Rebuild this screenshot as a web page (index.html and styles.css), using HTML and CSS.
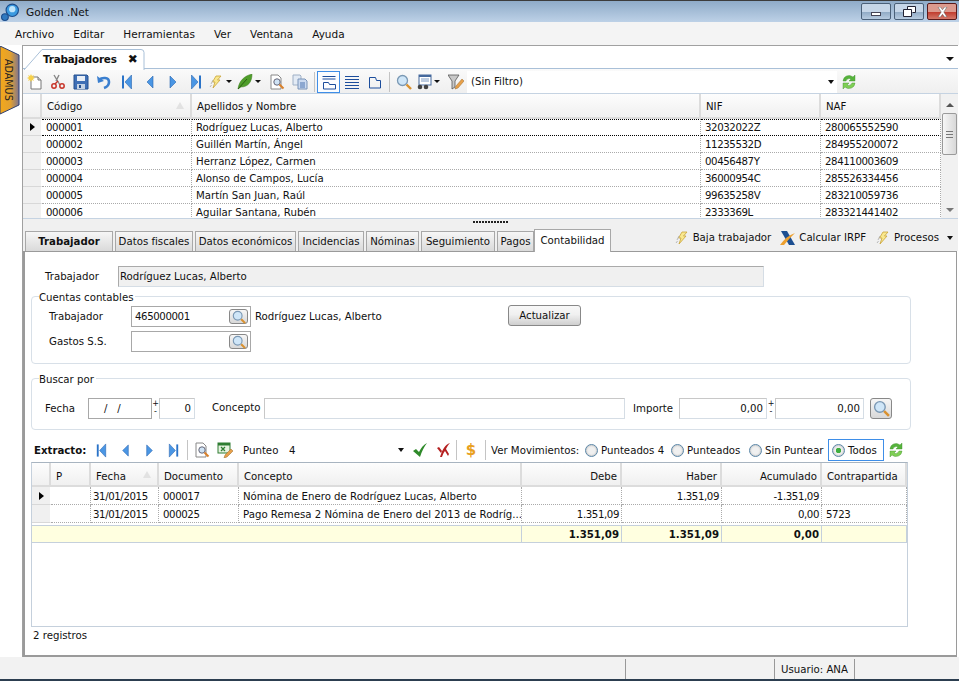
FILE: index.html
```html
<!DOCTYPE html>
<html lang="es">
<head>
    <meta charset="UTF-8">
    <title>Golden .Net</title>
    <link rel="stylesheet" href="styles.css">
</head>
<body>
<svg class="defs" width="0" height="0">
    <defs>
        <symbol id="i-new" viewBox="0 0 16 16"><path d="M4 3h7l3 3v9H4z" fill="#fff" stroke="#777"/><path d="M11 3v3h3" fill="#ddd" stroke="#777"/><path d="M4 0l1 2 2-1-1 2 2 1-2 1 1 2-2-1-1 2-1-2-2 1 1-2-2-1 2-1-1-2 2 1z" fill="#f6d04a"/></symbol>
        <symbol id="i-cut" viewBox="0 0 16 16"><path d="M4 1l6 10M9 1L6 7" stroke="#888" stroke-width="1.4" fill="none"/><circle cx="4" cy="12" r="2.2" fill="none" stroke="#c8352a" stroke-width="1.5"/><circle cx="12" cy="12" r="2.2" fill="none" stroke="#c8352a" stroke-width="1.5"/><path d="M5 10l3-3" stroke="#c8352a" stroke-width="1.4"/></symbol>
        <symbol id="i-save" viewBox="0 0 16 16"><path d="M1 1h13l1 1v13H1z" fill="#3f6fb5" stroke="#25508f"/><rect x="4" y="2" width="8" height="5" fill="#e8eef6"/><rect x="4" y="10" width="8" height="5" fill="#c4d2e4"/><rect x="6" y="11" width="2" height="3" fill="#25508f"/></symbol>
        <symbol id="i-undo" viewBox="0 0 16 16"><path d="M3 6c3-3 10-3 10 2 0 3-2 5-5 6" fill="none" stroke="#3b7fcf" stroke-width="2.6"/><path d="M1 2l1 7 6-2z" fill="#3b7fcf"/></symbol>
        <symbol id="i-first" viewBox="0 0 16 16"><rect x="3" y="1.500" width="2" height="13" fill="#2a73c8"/><path d="M12.500 1v14L6 8z" fill="#4a96e4" stroke="#2a66b0" stroke-width=".6"/></symbol>
        <symbol id="i-prev" viewBox="0 0 16 16"><path d="M11 2v12L5 8z" fill="#4a96e4" stroke="#2a66b0" stroke-width=".6"/></symbol>
        <symbol id="i-next" viewBox="0 0 16 16"><path d="M5 2v12l6-6z" fill="#4a96e4" stroke="#2a66b0" stroke-width=".6"/></symbol>
        <symbol id="i-last" viewBox="0 0 16 16"><rect x="11" y="1.500" width="2" height="13" fill="#2a73c8"/><path d="M3.500 1v14l6.500-7z" fill="#4a96e4" stroke="#2a66b0" stroke-width=".6"/></symbol>
        <symbol id="i-bolt" viewBox="0 0 16 16"><path d="M8 2h5L9.500 6H12l-7 8 2-6H4.500z" fill="#f9e88e" stroke="#c9a338" stroke-width=".8"/><path d="M3 10l2-4M2 13l1.500-2" stroke="#aaa" stroke-width=".8"/></symbol>
        <symbol id="i-leaf" viewBox="0 0 16 16"><path d="M1 15C2 7 7 2 15 0c0 8-4 13-11 13z" fill="#4f9e2a" stroke="#38761c" stroke-width=".5"/><path d="M1 15L10 5" stroke="#2c5f14"/></symbol>
        <symbol id="i-preview" viewBox="0 0 16 16"><path d="M2 1h7l3 3v11H2z" fill="#fff" stroke="#888"/><circle cx="8" cy="8" r="3.2" fill="#cfe3f5" stroke="#667"/><path d="M10.500 10.500l4 4" stroke="#d9802a" stroke-width="2"/></symbol>
        <symbol id="i-copy" viewBox="0 0 16 16"><path d="M1 1h7l1 1v9H1z" fill="#e3ebf5" stroke="#9fb0c6"/><path d="M6 5h7l2 2v8H6z" fill="#cbdaf0" stroke="#7a94b8"/><path d="M8 9h5M8 11h5M8 13h5" stroke="#4d75b0"/></symbol>
        <symbol id="i-form" viewBox="0 0 16 16"><path d="M1.500 2.500h13M1.500 5h13" stroke="#1c4d9c" fill="none"/><path d="M2.500 15V8.500h5l1 2h6V15z" fill="none" stroke="#1c4d9c"/></symbol>
        <symbol id="i-lines" viewBox="0 0 16 16"><path d="M1 2.500h14M1 5.500h14M1 8.500h14M1 11.500h14M1 14.500h14" stroke="#1c4d9c"/></symbol>
        <symbol id="i-folder" viewBox="0 0 16 16"><path d="M2.500 14V3.500h6l1 3h4V14z" fill="none" stroke="#1c4d9c"/></symbol>
        <symbol id="i-search" viewBox="0 0 16 16"><circle cx="6.500" cy="6.500" r="5" fill="#cfe6f8" stroke="#7a98b4" stroke-width="1.300"/><path d="M10.500 10.500l4.500 4.500" stroke="#d9912f" stroke-width="2.400"/></symbol>
        <symbol id="i-report" viewBox="0 0 16 16"><rect x="3" y="1" width="12" height="10" fill="#fff" stroke="#44689c"/><rect x="3" y="1" width="12" height="2" fill="#44689c"/><path d="M5 5h8M5 7h8" stroke="#7f9cc4"/><circle cx="4" cy="13" r="2.300" fill="#444"/><circle cx="10" cy="13" r="2.300" fill="#444"/></symbol>
        <symbol id="i-filter" viewBox="0 0 16 16"><path d="M0 1h11L7 7v6L4 15V7z" fill="#c8c8c8" stroke="#555" stroke-width=".8"/><path d="M14 5l2 2-6 7-3 1 1-3z" fill="#e8a04a" stroke="#9a6a2a" stroke-width=".5"/></symbol>
        <symbol id="i-refresh" viewBox="0 0 16 16"><path d="M2 7a6 6 0 0 1 10-4l2-2v6H8l2-2a3.500 3.500 0 0 0-5 2z" fill="#56b33c" stroke="#3f8f2c" stroke-width=".4"/><path d="M14 9a6 6 0 0 1-10 4l-2 2V9h6l-2 2a3.500 3.500 0 0 0 5-2z" fill="#7fcf55" stroke="#3f8f2c" stroke-width=".4"/></symbol>
        <symbol id="i-check" viewBox="0 0 16 16"><path d="M1 9l3-2 3 3c2-4 4-7 8-9-3 4-5 8-7 14z" fill="#2f8a2a"/></symbol>
        <symbol id="i-cross" viewBox="0 0 16 16"><path d="M15 1C10 3 8 6 5 15l2 0c1-3 2-5 3-6l3 5 1-2-3-5c1-2 2-4 4-6z" fill="#b52020"/><path d="M2 6l2-1 3 4-1 2z" fill="#b52020"/></symbol>
        <symbol id="i-excel" viewBox="0 0 16 16"><rect x="1" y="1" width="12" height="10" fill="#e6f2e0" stroke="#2f7d32"/><rect x="1" y="1" width="12" height="2.500" fill="#2f7d32"/><path d="M4 5l4 4M8 5L4 9" stroke="#2f7d32" stroke-width="1.300"/><path d="M14 7l2 2-6 6-3 1 1-3z" fill="#e8a04a" stroke="#9a6a2a" stroke-width=".5"/></symbol>
        <symbol id="i-irpf" viewBox="0 0 16 16"><path d="M1 1h6l8 14H9z" fill="#1d4f91"/><path d="M0 15C4 9 9 5 15 3l-5 5-6 7z" fill="#eda02f"/></symbol>
    </defs>
</svg>

<div class="window">
    <div class="titlebar">
        <svg class="app-logo" viewBox="0 0 16 16"><circle cx="10" cy="6.500" r="5.500" fill="#3a9ae0" stroke="#1c4d8c"/><circle cx="10" cy="5.500" r="2.800" fill="#bfe4fa"/><circle cx="3.500" cy="12.500" r="3" fill="#2f79c0" stroke="#1c4d8c"/></svg>
        <span class="app-title">Golden .Net</span>
        <div class="win-btns">
            <div class="win-btn"><span class="min-mark"></span></div>
            <div class="win-btn"><svg width="13" height="11" viewBox="0 0 13 11"><path d="M4.500 3V.500h8v6H9.500M.500 3.500h8v7h-8z" fill="#fff" stroke="#223"/></svg></div>
            <div class="win-btn close"><svg width="13" height="10" viewBox="0 0 13 10"><path d="M2 0h2.500l2 2.700L8.500 0H11L7.800 5 11 10H8.500l-2-2.700L4.500 10H2l3.200-5z" fill="#fff" stroke="#555" stroke-width=".5"/></svg></div>
        </div>
    </div>

    <div class="menubar">
        <span>Archivo</span><span>Editar</span><span>Herramientas</span><span>Ver</span><span>Ventana</span><span>Ayuda</span>
    </div>

    <div class="workspace">
        <div class="side">
            <svg class="side-tab" width="20" height="69" viewBox="0 0 20 69">
                <defs><linearGradient id="sideg"><stop offset="0" stop-color="#f4a81a"/><stop offset=".55" stop-color="#e2a030"/><stop offset="1" stop-color="#7d7590"/></linearGradient></defs>
                <path d="M0 0l19 9v50L0 68z" fill="url(#sideg)" stroke="#2e3f70"/>
                <text transform="translate(5 13) rotate(90)" class="side-text">ADAMUS</text>
            </svg>
        </div>

        <div class="doc">
            <div class="doc-tabs">
                <div class="doc-tab">
                    <svg class="doc-tab-edge" width="121" height="21" viewBox="0 0 121 21"><path d="M0 21L18 .500h99q3 0 3 3V21" fill="#fff" stroke="#a9c0d8"/></svg>
                    <b>Trabajadores</b><span class="doc-x">✖</span>
                </div>
                <span class="caret doc-caret"></span>
            </div>

            <div class="toolbar main-tools">
                <span class="tool"><svg><use href="#i-new"/></svg></span>
                <span class="tool"><svg><use href="#i-cut"/></svg></span>
                <span class="tool"><svg><use href="#i-save"/></svg></span>
                <span class="tool"><svg><use href="#i-undo"/></svg></span>
                <span class="tool"><svg><use href="#i-first"/></svg></span>
                <span class="tool"><svg><use href="#i-prev"/></svg></span>
                <span class="tool"><svg><use href="#i-next"/></svg></span>
                <span class="tool"><svg><use href="#i-last"/></svg></span>
                <span class="tool with-caret"><svg><use href="#i-bolt"/></svg><i class="caret"></i></span>
                <span class="tool with-caret"><svg><use href="#i-leaf"/></svg><i class="caret"></i></span>
                <span class="tool"><svg><use href="#i-preview"/></svg></span>
                <span class="tool"><svg><use href="#i-copy"/></svg></span>
                <span class="sep"></span>
                <span class="tool on"><svg><use href="#i-form"/></svg></span>
                <span class="tool"><svg><use href="#i-lines"/></svg></span>
                <span class="tool"><svg><use href="#i-folder"/></svg></span>
                <span class="sep"></span>
                <span class="tool"><svg><use href="#i-search"/></svg></span>
                <span class="tool with-caret"><svg><use href="#i-report"/></svg><i class="caret"></i></span>
                <span class="tool"><svg><use href="#i-filter"/></svg></span>
                <div class="filter-combo"><span>(Sin Filtro)</span><i class="caret"></i></div>
                <span class="tool"><svg><use href="#i-refresh"/></svg></span>
            </div>

            <div class="workers">
                <div class="workers-grid">
                    <div class="row head">
                        <div class="sel"></div>
                        <div class="cell sorted">Código<i class="sort-mark"></i></div>
                        <div class="cell">Apellidos y Nombre</div>
                        <div class="cell">NIF</div>
                        <div class="cell">NAF</div>
                    </div>
                    <div class="row current">
                        <div class="sel"><i class="row-arrow"></i></div>
                        <div class="cell d">000001</div><div class="cell">Rodríguez Lucas, Alberto</div><div class="cell d">32032022Z</div><div class="cell d">280065552590</div>
                    </div>
                    <div class="row">
                        <div class="sel"></div>
                        <div class="cell d">000002</div><div class="cell">Guillén Martín, Ángel</div><div class="cell d">11235532D</div><div class="cell d">284955200072</div>
                    </div>
                    <div class="row">
                        <div class="sel"></div>
                        <div class="cell d">000003</div><div class="cell">Herranz López, Carmen</div><div class="cell d">00456487Y</div><div class="cell d">284110003609</div>
                    </div>
                    <div class="row">
                        <div class="sel"></div>
                        <div class="cell d">000004</div><div class="cell">Alonso de Campos, Lucía</div><div class="cell d">36000954C</div><div class="cell d">285526334456</div>
                    </div>
                    <div class="row">
                        <div class="sel"></div>
                        <div class="cell d">000005</div><div class="cell">Martín San Juan, Raúl</div><div class="cell d">99635258V</div><div class="cell d">283210059736</div>
                    </div>
                    <div class="row">
                        <div class="sel"></div>
                        <div class="cell d">000006</div><div class="cell">Aguilar Santana, Rubén</div><div class="cell d">2333369L</div><div class="cell d">283321441402</div>
                    </div>
                </div>
                <div class="scrollbar">
                    <i class="scroll-up"></i>
                    <div class="scroll-thumb"><span class="grip"></span></div>
                    <i class="scroll-down"></i>
                </div>
            </div>

            <div class="splitter"><span></span></div>

            <div class="tabs-bar">
                <div class="tabs">
                    <div class="tab t-main">Trabajador</div>
                    <div class="tab t-fiscal">Datos fiscales</div>
                    <div class="tab t-eco">Datos económicos</div>
                    <div class="tab t-inc">Incidencias</div>
                    <div class="tab t-nom">Nóminas</div>
                    <div class="tab t-seg">Seguimiento</div>
                    <div class="tab t-pag">Pagos</div>
                    <div class="tab active">Contabilidad</div>
                </div>
                <div class="tab-actions">
                    <span class="action"><svg><use href="#i-bolt"/></svg>Baja trabajador</span>
                    <span class="action"><svg><use href="#i-irpf"/></svg>Calcular IRPF</span>
                    <span class="action"><svg><use href="#i-bolt"/></svg>Procesos<i class="caret"></i></span>
                </div>
            </div>

            <div class="panel">
                <div class="worker-row">
                    <label>Trabajador</label>
                    <div class="readonly">Rodríguez Lucas, Alberto</div>
                </div>

                <fieldset class="group accounts">
                    <legend>Cuentas contables</legend>
                    <div class="account-row">
                        <label>Trabajador</label>
                        <div class="lookup"><span class="d">465000001</span><button class="lens"><svg><use href="#i-search"/></svg></button></div>
                        <span class="lookup-name">Rodríguez Lucas, Alberto</span>
                        <button class="btn">Actualizar</button>
                    </div>
                    <div class="account-row">
                        <label>Gastos S.S.</label>
                        <div class="lookup"><span></span><button class="lens"><svg><use href="#i-search"/></svg></button></div>
                    </div>
                </fieldset>

                <fieldset class="group search">
                    <legend>Buscar por</legend>
                    <label class="l-fecha">Fecha</label>
                    <div class="field f-date">/&nbsp;&nbsp;&nbsp;/</div>
                    <span class="pm">+<br>-</span>
                    <div class="field f-days">0</div>
                    <label class="l-concepto">Concepto</label>
                    <div class="field f-concept"></div>
                    <label class="l-importe">Importe</label>
                    <div class="field f-amount">0,00</div>
                    <span class="pm pm-wide">+<br>-</span>
                    <div class="field f-amount to">0,00</div>
                    <button class="lens big"><svg><use href="#i-search"/></svg></button>
                </fieldset>

                <div class="toolbar extract-tools">
                    <b class="x-title">Extracto:</b>
                    <span class="tool nav t-nav"><svg><use href="#i-first"/></svg></span>
                    <span class="tool nav"><svg><use href="#i-prev"/></svg></span>
                    <span class="tool nav"><svg><use href="#i-next"/></svg></span>
                    <span class="tool nav"><svg><use href="#i-last"/></svg></span>
                    <span class="sep"></span>
                    <span class="tool"><svg><use href="#i-preview"/></svg></span>
                    <span class="tool"><svg><use href="#i-excel"/></svg></span>
                    <span class="x-punteo">Punteo</span>
                    <span class="x-num">4</span>
                    <i class="caret x-caret"></i>
                    <span class="tool"><svg><use href="#i-check"/></svg></span>
                    <span class="tool"><svg><use href="#i-cross"/></svg></span>
                    <span class="sep"></span>
                    <span class="dollar">$</span>
                    <span class="sep"></span>
                    <span class="x-ver">Ver Movimientos:</span>
                    <label class="radio r-1"><i></i>Punteados 4</label>
                    <label class="radio r-2"><i></i>Punteados</label>
                    <label class="radio r-3"><i></i>Sin Puntear</label>
                    <label class="radio checked"><i></i>Todos</label>
                    <span class="tool"><svg><use href="#i-refresh"/></svg></span>
                </div>

                <div class="extract-grid">
                    <div class="xrow head">
                        <div class="sel"></div>
                        <div class="cell">P</div>
                        <div class="cell sorted">Fecha<i class="sort-mark"></i></div>
                        <div class="cell">Documento</div>
                        <div class="cell">Concepto</div>
                        <div class="cell num">Debe</div>
                        <div class="cell num">Haber</div>
                        <div class="cell num">Acumulado</div>
                        <div class="cell">Contrapartida</div>
                    </div>
                    <div class="xrow">
                        <div class="sel"><i class="row-arrow"></i></div>
                        <div class="cell"></div>
                        <div class="cell d date">31/01/2015</div>
                        <div class="cell d">000017</div>
                        <div class="cell">Nómina de Enero de Rodríguez Lucas, Alberto</div>
                        <div class="cell num"></div>
                        <div class="cell num d">1.351,09</div>
                        <div class="cell num d">-1.351,09</div>
                        <div class="cell"></div>
                    </div>
                    <div class="xrow">
                        <div class="sel"></div>
                        <div class="cell"></div>
                        <div class="cell d date">31/01/2015</div>
                        <div class="cell d">000025</div>
                        <div class="cell">Pago Remesa 2 Nómina de Enero del 2013 de Rodríg...</div>
                        <div class="cell num d">1.351,09</div>
                        <div class="cell num"></div>
                        <div class="cell num d">0,00</div>
                        <div class="cell d">5723</div>
                    </div>
                    <div class="xrow totals">
                        <div class="total-fill"></div>
                        <div class="cell num">1.351,09</div>
                        <div class="cell num">1.351,09</div>
                        <div class="cell num">0,00</div>
                        <div class="cell"></div>
                    </div>
                </div>

                <div class="reg-count">2 registros</div>
            </div>
        </div>
    </div>

    <div class="statusbar">
        <span class="st st-1"></span>
        <span class="st st-2"></span>
        <span class="st st-3">Usuario: ANA</span>
    </div>
</div>
</body>
</html>
```

FILE: styles.css
```css
* {
    box-sizing: border-box;
}
html, body {
    margin: 0;
    background-color: #fff;
}
body {
    font-family: "DejaVu Sans", sans-serif;
    font-size: 10.2px;
    color: #111;
    overflow: hidden;
}
.defs {
    display: block;
    height: 0;
}
i {
    font-style: normal;
}
label {
    display: block;
}
.d {
    letter-spacing: -.4px;
}
.window {
    width: 959px;
    height: 681px;
    display: flex;
    flex-direction: column;
    overflow: hidden;
}

/* title and menu */
.titlebar {
    height: 22px;
    flex: none;
    display: flex;
    align-items: center;
    border-top: 1px solid #3c3c3c;
    background: linear-gradient(#8fabc8, #bdd1e7);
}
.app-logo {
    width: 18px;
    height: 18px;
    margin-left: 1px;
}
.app-title {
    margin-left: 7px;
    font-size: 10.6px;
}
.win-btns {
    margin-left: auto;
    margin-right: 2px;
    display: flex;
    gap: 3px;
    align-self: flex-start;
    margin-top: 2px;
}
.win-btn {
    width: 30px;
    height: 17px;
    border: 1px solid #4a6078;
    border-radius: 2px;
    background: linear-gradient(#c6d6e8 50%, #8fa9c4 52%, #b7cbe0);
    display: flex;
    align-items: center;
    justify-content: center;
}
.win-btn.close {
    border-color: #5a1a1a;
    background: linear-gradient(#dc9a8e 50%, #c0392b 52%, #d4796a);
}
.min-mark {
    width: 10px;
    height: 4px;
    margin-top: 4px;
    background: #fff;
    border: 1px solid #445;
}
.menubar {
    height: 23px;
    flex: none;
    display: flex;
    align-items: center;
    gap: 19px;
    padding-left: 15px;
    background-color: #f4f4f4;
    font-size: 10.5px;
}

/* workspace */
.workspace {
    flex: 1;
    display: flex;
    min-height: 0;
}
.side {
    width: 22px;
    flex: none;
    padding-top: 1px;
}
.side-tab {
    display: block;
}
.side-text {
    font-family: "DejaVu Sans", sans-serif;
    font-size: 9.6px;
    fill: #222;
}
.doc {
    flex: 1;
    display: flex;
    flex-direction: column;
    min-width: 0;
    margin-right: 1px;
    border-top: 1px solid #a0a0a0;
    border-left: 1px solid #a0a0a0;
}
.doc-tabs {
    height: 23px;
    flex: none;
    display: flex;
    align-items: flex-end;
    border-bottom: 1px solid #a9c0d8;
    background-color: #fff;
}
.doc-tab {
    width: 121px;
    height: 20px;
    margin-left: 1px;
    margin-bottom: -1px;
    padding-left: 19px;
    display: flex;
    align-items: center;
    position: relative;
    font-size: 10.4px;
    letter-spacing: -.2px;
}
.doc-tab-edge {
    position: absolute;
    left: 0;
    top: 0;
}
.doc-tab b, .doc-x {
    position: relative;
}
.doc-x {
    margin-left: 11px;
    font-size: 12px;
}
.caret {
    display: inline-block;
    width: 0;
    height: 0;
    border-left: 4px solid transparent;
    border-right: 4px solid transparent;
    border-top: 4px solid #111;
}
.doc-caret {
    margin-left: auto;
    margin-right: 4px;
    margin-bottom: 7px;
}

/* toolbars */
.toolbar {
    display: flex;
    align-items: center;
    flex: none;
}
.main-tools {
    height: 25px;
    padding-top: 1px;
    background: linear-gradient(#fafafa, #efefef);
    border-bottom: 1px solid #c5d3e2;
}
.tool {
    width: 23px;
    height: 22px;
    flex: none;
    display: flex;
    align-items: center;
    justify-content: center;
}
.tool svg {
    width: 16px;
    height: 16px;
}
.tool.with-caret {
    width: 29px;
    justify-content: flex-start;
    padding-left: 1px;
    gap: 2px;
}
.tool.with-caret .caret {
    border-left-width: 3px;
    border-right-width: 3px;
    border-top-width: 3px;
}
.tool.on {
    border: 1px solid #3e8ee8;
    background-color: #fbfdff;
}
.sep {
    width: 1px;
    height: 20px;
    flex: none;
    margin: 0 2px 0 3px;
    background-color: #c4c4c4;
}
.filter-combo {
    width: 370px;
    height: 22px;
    display: flex;
    align-items: center;
    justify-content: space-between;
    padding: 0 3px 0 4px;
    background-color: #fff;
}
.filter-combo .caret {
    border-left-width: 3px;
    border-right-width: 3px;
}

/* grids */
.workers {
    height: 125px;
    flex: none;
    display: flex;
    overflow: hidden;
    border-bottom: 1px solid #c5d3e2;
}
.workers-grid {
    flex: 1;
    min-width: 0;
}
.row, .xrow {
    display: grid;
}
.row {
    height: 17px;
    grid-template-columns: 19px 150px 509px 120px 120px;
}
.xrow {
    height: 18px;
    grid-template-columns: 19px 40px 68px 80px 283px 100px 100px 100px 85px;
}
.row.head {
    height: 25px;
}
.xrow.head {
    height: 24px;
}
.sel {
    background: #f0f0f0;
    border-right: 1px solid #fff;
    border-bottom: 1px solid #d8d8d8;
    display: flex;
    align-items: center;
    justify-content: center;
}
.cell {
    padding: 0 2px 0 4px;
    line-height: 16px;
    white-space: nowrap;
    overflow: hidden;
    border-right: 1px dotted #aaa;
    border-bottom: 1px dotted #aaa;
}
.row .cell {
    padding-top: 1px;
}
.xrow .cell {
    padding-top: 2px;
}
.cell.date {
    padding-left: 2px;
}
.num {
    text-align: right;
}
.head .sel, .head .cell {
    background: linear-gradient(#fdfdfd, #f0f0f0);
    border-right: 2px solid #dcdcdc;
    border-bottom: 2px solid #dcdcdc;
    line-height: 23px;
    padding-left: 5px;
    padding-right: 3px;
}
.sorted {
    position: relative;
}
.sort-mark {
    position: absolute;
    right: 6px;
    top: 8px;
    width: 0;
    height: 0;
    border-left: 4px solid transparent;
    border-right: 4px solid transparent;
    border-bottom: 7px solid #e2e2e2;
}
.current .cell {
    border-top: 1px dotted #000;
    border-bottom: 1px dotted #000;
    line-height: 14px;
}
.row-arrow {
    width: 0;
    height: 0;
    border-top: 4px solid transparent;
    border-bottom: 4px solid transparent;
    border-left: 5px solid #000;
}
.scrollbar {
    width: 17px;
    flex: none;
    display: flex;
    flex-direction: column;
    align-items: center;
    background-color: #f1f1f1;
}
.scroll-up, .scroll-down {
    width: 0;
    height: 0;
    border-left: 4px solid transparent;
    border-right: 4px solid transparent;
    margin: 9px 0 6px;
}
.scroll-up {
    border-bottom: 4px solid #555;
}
.scroll-down {
    border-top: 4px solid #777;
    margin: auto 0 6px;
}
.scroll-thumb {
    width: 15px;
    height: 42px;
    display: flex;
    align-items: center;
    justify-content: center;
    border: 1px solid #9a9a9a;
    border-radius: 2px;
    background: linear-gradient(90deg, #f6f6f6, #d8d8d8);
}
.grip {
    width: 7px;
    height: 7px;
    background: repeating-linear-gradient(#777 0 1px, transparent 1px 3px);
}
.splitter {
    height: 6px;
    flex: none;
    background-color: #f0f0f0;
    display: flex;
    align-items: center;
    justify-content: center;
}
.splitter span {
    width: 36px;
    height: 2px;
    background: repeating-linear-gradient(90deg, #222 0 2px, transparent 2px 3px);
}

/* tabs */
.tabs-bar {
    height: 26px;
    flex: none;
    display: flex;
    justify-content: space-between;
    background-color: #f0f0f0;
    padding: 0 5px 0 2px;
}
.tabs {
    display: flex;
    align-items: flex-end;
    gap: 2px;
}
.tab {
    height: 20px;
    border: 1px solid #a8a8a8;
    border-bottom: none;
    background: linear-gradient(#f6f6f6, #dadada);
    text-align: center;
    line-height: 19px;
    white-space: nowrap;
}
.t-main { width: 88px; font-weight: bold; }
.t-fiscal { width: 78px; }
.t-eco { width: 101px; }
.t-inc { width: 66px; }
.t-nom { width: 53px; }
.t-seg { width: 74px; }
.t-pag { width: 37px; }
.tab.active {
    width: 77px;
    height: 23px;
    margin-left: -2px;
    margin-bottom: -1px;
    background: #fff;
    position: relative;
    line-height: 21px;
}
.tab-actions {
    display: flex;
    align-items: center;
    margin-top: -1px;
}
.action {
    display: flex;
    align-items: center;
    gap: 3px;
    margin-left: 9px;
    white-space: nowrap;
}
.action svg {
    width: 16px;
    height: 16px;
}
.action .caret {
    border-left-width: 3px;
    border-right-width: 3px;
    margin-left: 5px;
}

/* panel */
.panel {
    flex: 1;
    min-height: 0;
    margin-right: 1px;
    padding: 14px 0 0 6px;
    background-color: #fff;
    border: 1px solid #9a9a9a;
    border-left-width: 2px;
    border-bottom-width: 2px;
}
.worker-row {
    display: flex;
    align-items: center;
    height: 21px;
    margin-bottom: 1px;
}
.worker-row label {
    width: 87px;
    padding-left: 14px;
}
.readonly {
    width: 646px;
    height: 21px;
    line-height: 19px;
    padding-left: 1px;
    background-color: #f0f0f0;
    border: 1px solid #d5dde5;
    border-left-color: #aaa;
    border-top-color: #aaa;
}
.group {
    width: 880px;
    margin: 0;
    padding: 0;
    min-width: 0;
    border: 1px solid #d8e0e8;
    border-radius: 4px;
}
.group legend {
    padding: 0 2px 0 0;
    line-height: 13px;
    position: relative;
    top: 1px;
}
.accounts {
    height: 74px;
    margin-top: 3px;
    padding: 3px 0 0 17px;
}
.accounts legend {
    margin-left: -10px;
}
.account-row {
    display: flex;
    align-items: center;
    height: 21px;
    margin-bottom: 4px;
}
.account-row label {
    width: 82px;
}
.lookup {
    width: 120px;
    height: 21px;
    padding: 0 2px 0 3px;
    display: flex;
    align-items: center;
    justify-content: space-between;
    border: 1px solid #a8a8a8;
}
.lookup-name {
    margin-left: 4px;
    width: 253px;
}
.lens {
    width: 19px;
    height: 15px;
    padding: 0;
    display: flex;
    align-items: center;
    justify-content: center;
    border: 1px solid #888;
    border-radius: 3px;
    background: linear-gradient(#f6f6f6, #d8d8d8);
}
.lens svg {
    width: 14px;
    height: 14px;
}
.lens.big {
    width: 22px;
    height: 21px;
    margin-left: 6px;
}
.lens.big svg {
    width: 17px;
    height: 17px;
}
.btn {
    width: 73px;
    height: 21px;
    margin-bottom: 2px;
    padding: 0;
    font: inherit;
    color: #111;
    border: 1px solid #888;
    border-radius: 3px;
    background: linear-gradient(#f8f8f8, #f0f0f0 45%, #cfcfcf);
}
.search {
    height: 58px;
    margin-top: 8px;
    display: flex;
    align-items: center;
    padding: 2px 0 0 13px;
}
.search legend {
    margin-left: -6px;
}
.search > * {
    flex: none;
}
.field {
    height: 21px;
    line-height: 19px;
    padding: 0 3px;
    text-align: right;
    border: 1px solid #d5dde5;
    border-left-color: #c8c8c8;
    border-top-color: #c8c8c8;
}
.l-fecha { width: 43px; }
.f-date {
    width: 64px;
    text-align: left;
    padding-left: 15px;
    border-color: #a8a8a8;
}
.pm {
    width: 7px;
    font-size: 8px;
    line-height: 8px;
    text-align: center;
}
.pm-wide { width: 8px; }
.f-days { width: 36px; }
.l-concepto {
    width: 52px;
    margin-left: 17px;
    margin-top: -1px;
}
.f-concept { width: 361px; }
.l-importe {
    width: 46px;
    margin-left: 8px;
}
.f-amount { width: 88px; }
.f-amount.to { width: 89px; }
.extract-tools {
    height: 26px;
    padding-top: 2px;
    margin-top: 6px;
    margin-left: 1px;
}
.x-title {
    width: 54px;
    padding-left: 2px;
    white-space: nowrap;
}
.tool.nav {
    width: 24px;
}
.t-nav {
    margin-left: 3px;
}
.extract-tools .nav svg {
    width: 15px;
    height: 15px;
}
.extract-tools .sep {
    margin: 0 2px;
}
.x-punteo {
    margin-left: 7px;
    width: 46px;
}
.x-num {
    width: 108px;
}
.x-caret {
    border-left-width: 3px;
    border-right-width: 3px;
    margin: 0 4px 0 1px;
}
.dollar {
    width: 24px;
    text-align: center;
    font-size: 15px;
    font-weight: bold;
    color: #e8a020;
}
.x-ver {
    margin-left: 3px;
    width: 94px;
    white-space: nowrap;
}
.radio {
    display: flex;
    align-items: center;
    gap: 3px;
    height: 22px;
    flex: none;
    white-space: nowrap;
}
.r-1 { width: 86px; }
.r-2 { width: 78px; }
.r-3 { width: 79px; }
.radio i {
    width: 13px;
    height: 13px;
    flex: none;
    border: 1px solid #5b87a8;
    border-radius: 50%;
    background: #f0f0f0;
    box-shadow: inset 0 0 2px #999;
}
.radio.checked {
    width: 56px;
    padding-left: 3px;
    border: 1px solid #3e8ee8;
}
.radio.checked i {
    background: radial-gradient(circle, #3fae3f 0 2.500px, #f0f0f0 3px);
}
.extract-grid {
    width: 877px;
    height: 165px;
    border: 1px solid #c5d0dc;
    border-top-color: #a8b4c0;
}
.row.head .cell {
    padding-top: 1px;
}
.xrow.head .cell {
    padding-top: 2px;
}
.xrow.totals {
    height: 18px;
    margin-top: 2px;
    background-color: #ffffe0;
    border-top: 1px solid #c5d0dc;
    border-bottom: 1px solid #c5d0dc;
    font-weight: bold;
}
.total-fill {
    grid-column: 1 / 6;
    border-right: 1px solid #c5d0dc;
}
.totals .cell {
    padding-top: 1px;
    border-bottom: none;
    border-right: 1px solid #c5d0dc;
}
.reg-count {
    padding: 2px 2px 0;
    line-height: 14px;
}

/* status */
.statusbar {
    height: 24px;
    flex: none;
    display: flex;
    background-color: #f2f2f2;
    border-bottom: 2px solid #2c3e50;
}
.st {
    height: 20px;
    margin-top: 2px;
    border-right: 1px solid #999;
}
.st-1 {
    width: 626px;
}
.st-2 {
    width: 149px;
}
.st-3 {
    width: 80px;
    padding-left: 6px;
    line-height: 22px;
    white-space: nowrap;
}
```
